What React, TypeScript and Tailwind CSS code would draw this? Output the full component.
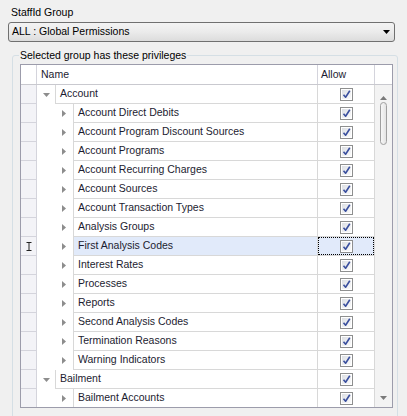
import React from "react";

type Row = { name: string; level: 0 | 1 };

const rows: Row[] = [
  { name: "Account", level: 0 },
  { name: "Account Direct Debits", level: 1 },
  { name: "Account Program Discount Sources", level: 1 },
  { name: "Account Programs", level: 1 },
  { name: "Account Recurring Charges", level: 1 },
  { name: "Account Sources", level: 1 },
  { name: "Account Transaction Types", level: 1 },
  { name: "Analysis Groups", level: 1 },
  { name: "First Analysis Codes", level: 1 },
  { name: "Interest Rates", level: 1 },
  { name: "Processes", level: 1 },
  { name: "Reports", level: 1 },
  { name: "Second Analysis Codes", level: 1 },
  { name: "Termination Reasons", level: 1 },
  { name: "Warning Indicators", level: 1 },
  { name: "Bailment", level: 0 },
  { name: "Bailment Accounts", level: 1 },
];

const SELECTED = 8;

function CheckBox() {
  return (
    <svg width="13" height="13" viewBox="0 0 13 13">
      <defs>
        <linearGradient id="cbg" x1="0" y1="0" x2="1" y2="1">
          <stop offset="0" stopColor="#dcdfe4" />
          <stop offset="1" stopColor="#fbfbfb" />
        </linearGradient>
      </defs>
      <rect x="0.5" y="0.5" width="12" height="12" fill="#ffffff" stroke="#8e8f8f" />
      <rect x="2" y="2" width="9" height="9" fill="url(#cbg)" />
      <path d="M3.5 6.8 L5.6 9.2 L9.8 2.8" fill="none" stroke="#3a4f9e" strokeWidth="1.6" strokeLinejoin="round" />
    </svg>
  );
}

function RightArrow() {
  return (
    <svg width="4" height="7" viewBox="0 0 4 7">
      <path d="M0 0 L4 3.5 L0 7 Z" fill="#8d8d8d" />
    </svg>
  );
}

function DownArrow() {
  return (
    <svg width="7" height="4" viewBox="0 0 7 4">
      <path d="M0 0 L7 0 L3.5 4 Z" fill="#8d8d8d" />
    </svg>
  );
}

function IBeam() {
  return (
    <svg width="6" height="9" viewBox="0 0 6 9">
      <path d="M0.5 0.5 H5.5 M3 0.5 V8.5 M0.5 8.5 H5.5" stroke="#222" strokeWidth="1" fill="none" />
    </svg>
  );
}

function TreeRow({ row, index }: { row: Row; index: number }) {
  const selected = index === SELECTED;
  return (
    <div className="flex h-[19px] shrink-0">
      <div className="flex w-[16px] items-center justify-center border-r border-b border-[#d4d4dc] bg-[#f3f3f7]">
        {selected && <IBeam />}
      </div>
      <div className="flex w-[281px] border-r border-[#d8d8d8]">
        {row.level === 0 ? (
          <div className="flex w-[18px] items-center justify-center">
            <DownArrow />
          </div>
        ) : (
          <div className="flex w-[36px] items-center pl-[25px]">
            <RightArrow />
          </div>
        )}
        <div
          className={`flex flex-1 items-center border-l border-b border-[#d8d8d8] pl-[4px] ${
            selected ? "bg-[#e1eafa]" : ""
          }`}
        >
          {row.name}
        </div>
      </div>
      <div className="flex w-[57px] border-r border-b border-[#d8d8d8]">
        <div
          className={`flex flex-1 items-center justify-center ${
            selected ? "border border-dotted border-black bg-[#e1eafa]" : ""
          }`}
        >
          <CheckBox />
        </div>
      </div>
    </div>
  );
}

export default function App() {
  return (
    <div
      className="h-[416px] w-[407px] overflow-hidden bg-[#f0f0f0] text-[10.5px] text-[#1c1c30]"
      style={{ fontFamily: '"Liberation Sans", Arial, sans-serif' }}
    >
      <div className="h-[18px] pl-[11px] pt-[5px] leading-[14px] text-black">StaffId Group</div>

      <div className="ml-[8px] mt-[4px] flex h-[20px] w-[387px] items-center rounded-[3px] border border-[#707070] bg-gradient-to-b from-[#f3f3f3] via-[#ebebeb] to-[#dcdcdc] pl-[3px] pr-[3px] text-black">
        <span className="flex-1">ALL : Global Permissions</span>
        <svg width="7" height="4" viewBox="0 0 7 4" className="mr-[1px]">
          <path d="M0 0 L7 0 L3.5 4 Z" fill="#000" />
        </svg>
      </div>

      <fieldset className="ml-[12px] mt-[7px] h-[380px] w-[386px] rounded-[3px] border border-[#d5dfe5] pl-[7px] pr-[4px] pt-[2px]">
        <legend className="-ml-[1px] px-[1px] leading-[13px] text-black">Selected group has these privileges</legend>

        <div className="flex h-[344px] w-[373px] flex-col border border-[#9c9cab] bg-white">
          <div className="flex h-[20px] shrink-0 border-b border-[#c9c9cf]">
            <div className="w-[16px] border-r border-[#d4d4dc]" />
            <div className="flex w-[281px] items-center border-r border-[#d4d4dc] pl-[4px]">Name</div>
            <div className="flex w-[57px] items-center border-r border-[#d4d4dc] pl-[3px]">Allow</div>
            <div className="flex-1" />
          </div>

          <div className="flex min-h-0 flex-1">
            <div className="flex w-[354px] flex-col overflow-hidden">
              {rows.map((r, i) => (
                <TreeRow key={r.name} row={r} index={i} />
              ))}
            </div>
            <div className="flex flex-1 flex-col items-center bg-[#f3f3f3] pt-[11px] pb-[7px]">
              <svg width="7" height="4" viewBox="0 0 7 4">
                <path d="M0 4 L7 4 L3.5 0 Z" fill="#7a7a7a" />
              </svg>
              <div className="mt-[2px] h-[43px] w-[7px] rounded-full border border-[#9f9f9f] bg-gradient-to-r from-[#f7f7f7] to-[#e4e4e4]" />
              <div className="flex-1" />
              <svg width="7" height="4" viewBox="0 0 7 4">
                <path d="M0 0 L7 0 L3.5 4 Z" fill="#7a7a7a" />
              </svg>
            </div>
          </div>
        </div>
      </fieldset>
    </div>
  );
}
